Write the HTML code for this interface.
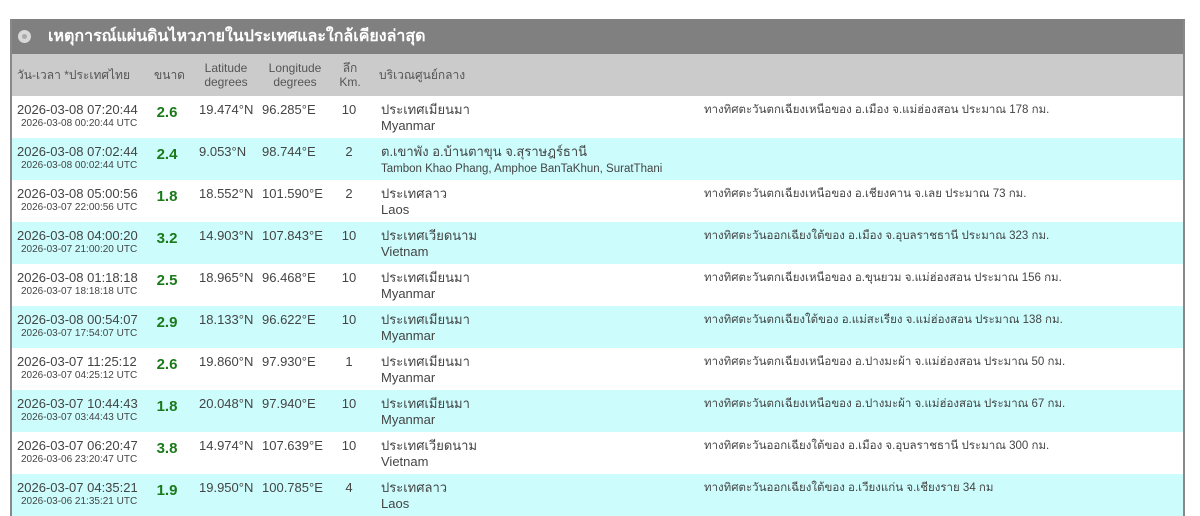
<!DOCTYPE html>
<html><head><meta charset="utf-8"><style>
body{margin:0;background:#fff;width:1200px;height:513px;overflow:hidden;font-family:"Liberation Sans",sans-serif;color:#444}
.wrap{position:absolute;left:10px;top:19px;width:1175px;border-left:2px solid #888;border-right:2px solid #888;box-sizing:border-box}
.title{height:35px;background:#808080;color:#fff;font-weight:bold;font-size:16px;line-height:35px;padding-left:36px;position:relative}
.title .dot{position:absolute;left:6px;top:11px;width:13px;height:13px;border-radius:50%;background:#d8d8d8}
.title .dot:after{content:"";position:absolute;left:4px;top:4px;width:5px;height:5px;border-radius:50%;background:#aaa}
table{border-collapse:collapse;width:100%;table-layout:fixed}
th{background:#cbcbcb;font-weight:normal;font-size:12px;color:#555;height:42px;padding:0;line-height:14px}
td{height:42px;padding:0;vertical-align:top;font-size:13px;padding-top:6px;box-sizing:border-box;line-height:16px;white-space:nowrap;overflow:hidden}
tr.c td{background:#ccfcfc}
.u{font-size:10px;margin-left:4px;line-height:12px}
.m{color:#1a7a1a;font-size:15px;font-weight:bold;text-align:center;padding-top:9px}
.d{text-align:center}
.la{padding-left:17px}
.lo{padding-left:2px}
.r{padding-left:13px}
.dir{font-size:11.5px;padding-left:13px}
</style></head><body>
<div class="wrap">
<div class="title"><span class="dot"></span>เหตุการณ์แผ่นดินไหวภายในประเทศและใกล้เคียงล่าสุด</div>
<table>
<colgroup><col style="width:135px"><col style="width:45px"><col style="width:68px"><col style="width:70px"><col style="width:40px"><col style="width:323px"><col></colgroup>
<tr><th style="text-align:left;padding-left:5px">วัน-เวลา *ประเทศไทย</th><th>ขนาด</th><th>Latitude<br>degrees</th><th>Longitude<br>degrees</th><th>ลึก<br>Km.</th><th style="text-align:left;padding-left:9px">บริเวณศูนย์กลาง</th><th></th></tr>
</table>
<table>
<colgroup><col style="width:140px"><col style="width:30px"><col style="width:78px"><col style="width:70px"><col style="width:38px"><col style="width:323px"><col></colgroup>
<tr><td style="padding-left:5px">2026-03-08 07:20:44<div class="u">2026-03-08 00:20:44 UTC</div></td><td class="m">2.6</td><td class="la">19.474°N</td><td class="lo">96.285°E</td><td class="d">10</td><td class="r">ประเทศเมียนมา<br>Myanmar</td><td class="dir">ทางทิศตะวันตกเฉียงเหนือของ อ.เมือง จ.แม่ฮ่องสอน ประมาณ 178 กม.</td></tr>
<tr class="c"><td style="padding-left:5px">2026-03-08 07:02:44<div class="u">2026-03-08 00:02:44 UTC</div></td><td class="m">2.4</td><td class="la">9.053°N</td><td class="lo">98.744°E</td><td class="d">2</td><td class="r">ต.เขาพัง อ.บ้านตาขุน จ.สุราษฎร์ธานี<br><span style="font-size:11.5px">Tambon Khao Phang, Amphoe BanTaKhun, SuratThani</span></td><td class="dir"></td></tr>
<tr><td style="padding-left:5px">2026-03-08 05:00:56<div class="u">2026-03-07 22:00:56 UTC</div></td><td class="m">1.8</td><td class="la">18.552°N</td><td class="lo">101.590°E</td><td class="d">2</td><td class="r">ประเทศลาว<br>Laos</td><td class="dir">ทางทิศตะวันตกเฉียงเหนือของ อ.เชียงคาน จ.เลย ประมาณ 73 กม.</td></tr>
<tr class="c"><td style="padding-left:5px">2026-03-08 04:00:20<div class="u">2026-03-07 21:00:20 UTC</div></td><td class="m">3.2</td><td class="la">14.903°N</td><td class="lo">107.843°E</td><td class="d">10</td><td class="r">ประเทศเวียดนาม<br>Vietnam</td><td class="dir">ทางทิศตะวันออกเฉียงใต้ของ อ.เมือง จ.อุบลราชธานี ประมาณ 323 กม.</td></tr>
<tr><td style="padding-left:5px">2026-03-08 01:18:18<div class="u">2026-03-07 18:18:18 UTC</div></td><td class="m">2.5</td><td class="la">18.965°N</td><td class="lo">96.468°E</td><td class="d">10</td><td class="r">ประเทศเมียนมา<br>Myanmar</td><td class="dir">ทางทิศตะวันตกเฉียงเหนือของ อ.ขุนยวม จ.แม่ฮ่องสอน ประมาณ 156 กม.</td></tr>
<tr class="c"><td style="padding-left:5px">2026-03-08 00:54:07<div class="u">2026-03-07 17:54:07 UTC</div></td><td class="m">2.9</td><td class="la">18.133°N</td><td class="lo">96.622°E</td><td class="d">10</td><td class="r">ประเทศเมียนมา<br>Myanmar</td><td class="dir">ทางทิศตะวันตกเฉียงใต้ของ อ.แม่สะเรียง จ.แม่ฮ่องสอน ประมาณ 138 กม.</td></tr>
<tr><td style="padding-left:5px">2026-03-07 11:25:12<div class="u">2026-03-07 04:25:12 UTC</div></td><td class="m">2.6</td><td class="la">19.860°N</td><td class="lo">97.930°E</td><td class="d">1</td><td class="r">ประเทศเมียนมา<br>Myanmar</td><td class="dir">ทางทิศตะวันตกเฉียงเหนือของ อ.ปางมะผ้า จ.แม่ฮ่องสอน ประมาณ 50 กม.</td></tr>
<tr class="c"><td style="padding-left:5px">2026-03-07 10:44:43<div class="u">2026-03-07 03:44:43 UTC</div></td><td class="m">1.8</td><td class="la">20.048°N</td><td class="lo">97.940°E</td><td class="d">10</td><td class="r">ประเทศเมียนมา<br>Myanmar</td><td class="dir">ทางทิศตะวันตกเฉียงเหนือของ อ.ปางมะผ้า จ.แม่ฮ่องสอน ประมาณ 67 กม.</td></tr>
<tr><td style="padding-left:5px">2026-03-07 06:20:47<div class="u">2026-03-06 23:20:47 UTC</div></td><td class="m">3.8</td><td class="la">14.974°N</td><td class="lo">107.639°E</td><td class="d">10</td><td class="r">ประเทศเวียดนาม<br>Vietnam</td><td class="dir">ทางทิศตะวันออกเฉียงใต้ของ อ.เมือง จ.อุบลราชธานี ประมาณ 300 กม.</td></tr>
<tr class="c"><td style="padding-left:5px">2026-03-07 04:35:21<div class="u">2026-03-06 21:35:21 UTC</div></td><td class="m">1.9</td><td class="la">19.950°N</td><td class="lo">100.785°E</td><td class="d">4</td><td class="r">ประเทศลาว<br>Laos</td><td class="dir">ทางทิศตะวันออกเฉียงใต้ของ อ.เวียงแก่น จ.เชียงราย 34 กม</td></tr>
</table>
</div>
</body></html>
